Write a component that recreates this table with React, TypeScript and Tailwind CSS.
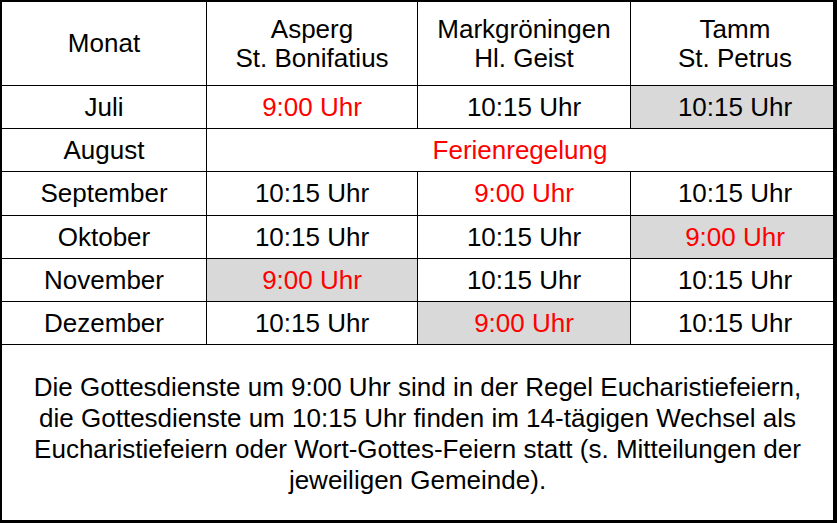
import React from "react";

type Cell = { text: string; red?: boolean; gray?: boolean };

const rows: { month: string; cells: Cell[] }[] = [
  {
    month: "Juli",
    cells: [{ text: "9:00 Uhr", red: true }, { text: "10:15 Uhr" }, { text: "10:15 Uhr", gray: true }],
  },
  {
    month: "September",
    cells: [{ text: "10:15 Uhr" }, { text: "9:00 Uhr", red: true }, { text: "10:15 Uhr" }],
  },
  {
    month: "Oktober",
    cells: [{ text: "10:15 Uhr" }, { text: "10:15 Uhr" }, { text: "9:00 Uhr", red: true, gray: true }],
  },
  {
    month: "November",
    cells: [{ text: "9:00 Uhr", red: true, gray: true }, { text: "10:15 Uhr" }, { text: "10:15 Uhr" }],
  },
  {
    month: "Dezember",
    cells: [{ text: "10:15 Uhr" }, { text: "9:00 Uhr", red: true, gray: true }, { text: "10:15 Uhr" }],
  },
];

function C({ c, last }: { c: Cell; last: boolean }) {
  return (
    <div
      className={`flex items-center justify-center ${last ? "pl-[6px]" : ""} ${
        c.gray ? "bg-[#d9d9d9]" : "bg-white"
      } ${c.red ? "text-[#ff0000]" : "text-black"}`}
    >
      {c.text}
    </div>
  );
}

function M({ text }: { text: string }) {
  return <div className="flex items-center justify-center bg-white text-black">{text}</div>;
}

export default function App() {
  const renderRow = (r: { month: string; cells: Cell[] }) => (
    <React.Fragment key={r.month}>
      <M text={r.month} />
      {r.cells.map((c, i) => (
        <C key={i} c={c} last={i === 2} />
      ))}
    </React.Fragment>
  );

  return (
    <div
      className="w-[837px] h-[523px] bg-white border-l-2 border-t-2 border-r-4 border-b-[3px] border-black text-[26px] leading-[29px]"
      style={{ fontFamily: '"Liberation Sans", Arial, sans-serif' }}
    >
      <div className="grid h-full grid-cols-[204px_210px_212px_202px] grid-rows-[83px_42px_42px_43px_42px_42px_42px_175px] gap-px bg-black">
        <div className="flex items-center justify-center bg-white">Monat</div>
        <div className="flex flex-col items-center justify-center bg-white text-center">
          <span>Asperg</span>
          <span>St. Bonifatius</span>
        </div>
        <div className="flex flex-col items-center justify-center bg-white text-center">
          <span>Markgröningen</span>
          <span>Hl. Geist</span>
        </div>
        <div className="flex flex-col items-center justify-center bg-white text-center pl-[6px]">
          <span>Tamm</span>
          <span>St. Petrus</span>
        </div>
        {renderRow(rows[0])}
        <M text="August" />
        <div className="col-span-3 flex items-center justify-center bg-white text-[#ff0000]">Ferienregelung</div>
        {rows.slice(1).map(renderRow)}
        <div className="col-span-4 flex items-center justify-center bg-white text-center leading-[31px] pt-[3px]">
          <p>
            Die Gottesdienste um 9:00 Uhr sind in der Regel Eucharistiefeiern,
            <br />
            die Gottesdienste um 10:15 Uhr finden im 14-tägigen Wechsel als
            <br />
            Eucharistiefeiern oder Wort-Gottes-Feiern statt (s. Mitteilungen der
            <br />
            jeweiligen Gemeinde).
          </p>
        </div>
      </div>
    </div>
  );
}
